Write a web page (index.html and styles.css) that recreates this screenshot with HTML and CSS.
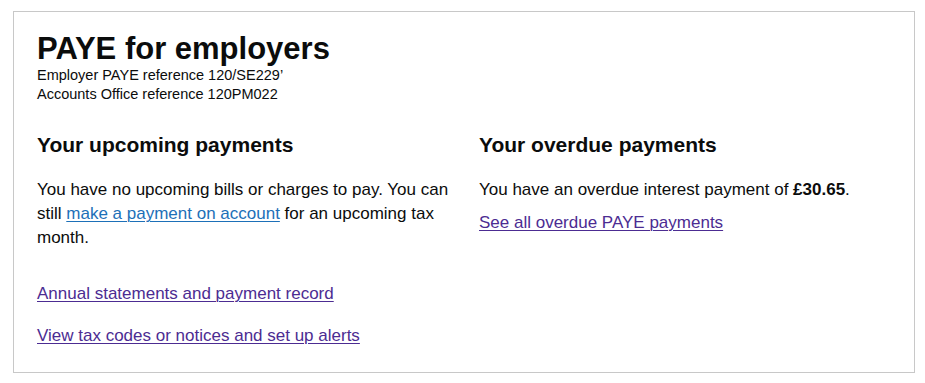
FILE: index.html
```html
<!DOCTYPE html>
<html lang="en">
<head>
<meta charset="utf-8">
<title>PAYE for employers</title>
<link rel="stylesheet" href="styles.css">
</head>
<body>
<div class="card">
  <header class="card-head">
    <h1 class="title">PAYE for employers</h1>
    <p class="ref">Employer PAYE reference 120/SE229’</p>
    <p class="ref">Accounts Office reference 120PM022</p>
  </header>
  <div class="cols">
    <section class="col">
      <h2 class="sub">Your upcoming payments</h2>
      <p class="body">You have no upcoming bills or charges to pay. You can still <a class="link" href="#">make a payment on account</a> for an upcoming tax month.</p>
    </section>
    <section class="col">
      <h2 class="sub">Your overdue payments</h2>
      <p class="body">You have an overdue interest payment of <strong>£30.65</strong>.</p>
      <p class="body"><a class="link visited" href="#">See all overdue PAYE payments</a></p>
    </section>
  </div>
  <ul class="links">
    <li><a class="link visited" href="#">Annual statements and payment record</a></li>
    <li><a class="link visited" href="#">View tax codes or notices and set up alerts</a></li>
  </ul>
</div>
</body>
</html>
```
FILE: styles.css
```css
* { box-sizing: border-box; }
html, body { background: #fff; }
body {
  margin: 0;
  padding: 11px 10px 10px 13px;
  font-family: "Liberation Sans", Arial, sans-serif;
  color: #0b0c0c;
}
.card {
  width: 902px;
  height: 362px;
  border: 1px solid #c8c8c8;
  padding: 19px 23px 0 23px;
}
.title {
  margin: 0;
  font-size: 31px;
  line-height: 36px;
  font-weight: 700;
}
.ref {
  margin: 0;
  font-size: 14.5px;
  line-height: 19px;
}
.ref:first-of-type { margin-top: -1px; }
.cols {
  display: grid;
  grid-template-columns: 1fr 1fr;
  column-gap: 30px;
  margin-top: 28px;
}
.sub {
  margin: 0 0 20px 0;
  font-size: 21px;
  line-height: 26px;
  font-weight: 700;
}
.body {
  margin: 0 0 9px 0;
  font-size: 17px;
  line-height: 24px;
}
.body strong { font-weight: 700; }
.link {
  color: #1d70b8;
  text-decoration: underline;
  text-underline-offset: 2px;
  text-decoration-thickness: 1px;
}
.link.visited { color: #4c2c92; }
.links {
  list-style: none;
  margin: 23px 0 0 0;
  padding: 0;
  font-size: 17px;
  line-height: 24px;
}
.links li { margin-bottom: 18px; }
```
